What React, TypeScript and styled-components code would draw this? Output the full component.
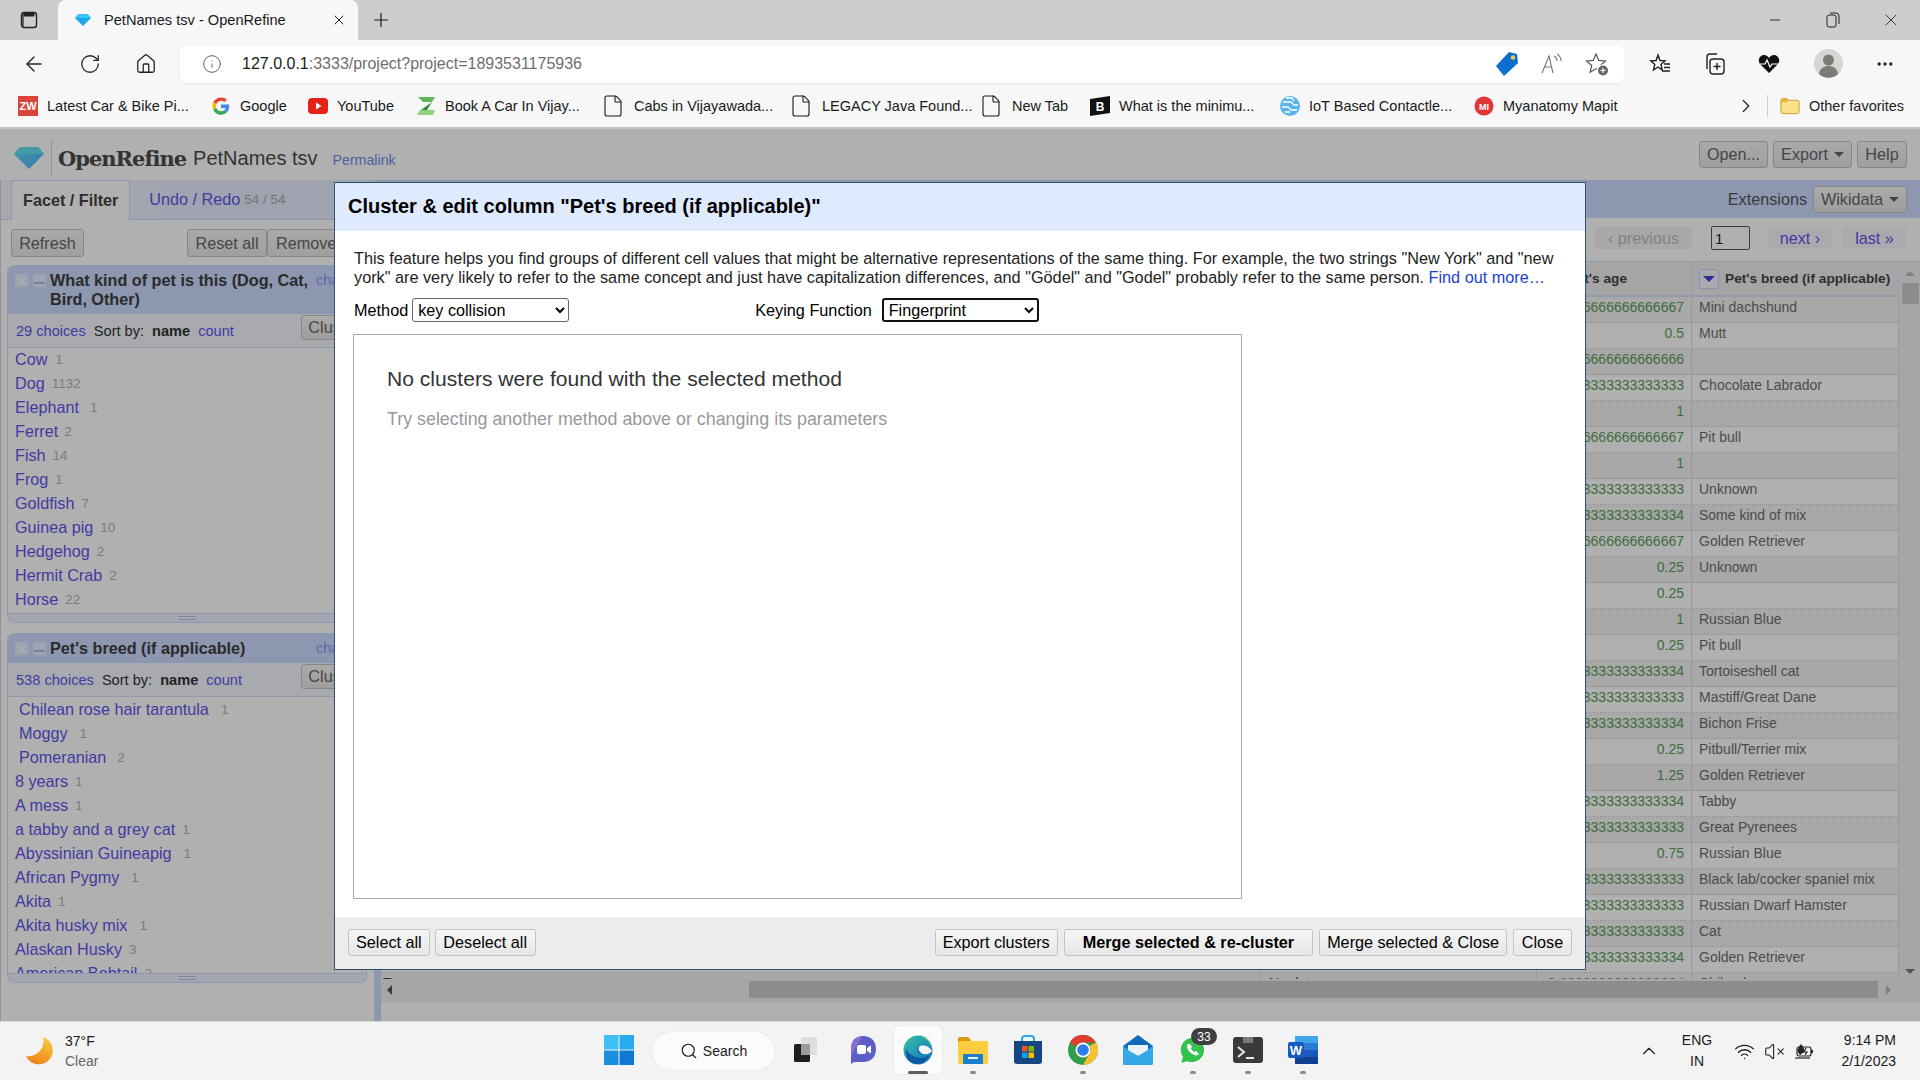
import React from 'react';
import styled, { createGlobalStyle } from 'styled-components';
import {
  ArrowLeft,
  ChevronRight,
  ChevronUp,
  Ellipsis,
  File,
  Home,
  Info,
  Minus,
  Plus,
  RotateCw,
  Search,
  VolumeX,
  Wifi,
  X,
} from 'lucide-react';

const GlobalStyle = createGlobalStyle`
  html, body {
    margin: 0;
    padding: 0;
    width: 1920px;
    height: 1080px;
    overflow: hidden;
    font-family: "Liberation Sans", Arial, sans-serif;
  }
  * { box-sizing: border-box; }
`;

const Page = styled.div`
  width: 1920px;
  height: 1080px;
  display: flex;
  flex-direction: column;
  background: #fff;
`;

/* browser chrome */
const TabStrip = styled.div`
  height: 40px;
  display: flex;
  background: #cdcdcd;
  color: #1a1a1a;
`;
const StripButton = styled.div<{ $w: number }>`
  width: ${p => p.$w}px;
  display: flex;
  align-items: center;
  justify-content: center;
  flex: none;
`;
const Tab = styled.div`
  width: 300px;
  padding: 0 11px 0 17px;
  display: flex;
  align-items: center;
  background: #f7f7f7;
  border-radius: 8px 8px 0 0;
  font-size: 14.6px;
`;
const TabTitle = styled.span`
  margin-left: 13px;
  flex: 1;
`;
const Spacer = styled.div`
  flex: 1;
`;
const Toolbar = styled.div`
  height: 47px;
  display: flex;
  align-items: center;
  padding: 0 9px 0 6px;
  background: #f7f7f7;
  color: #222;
`;
const NavButton = styled.div<{ $w?: number }>`
  width: ${p => p.$w ?? 56}px;
  display: flex;
  justify-content: center;
  flex: none;
`;
const AddressBar = styled.div`
  flex: 1;
  height: 38px;
  margin: 0 9px 0 6px;
  padding: 0 15px 0 22px;
  display: flex;
  align-items: center;
  gap: 20px;
  background: #fff;
  border-radius: 6px;
  box-shadow: 0 1px 2px rgba(0, 0, 0, 0.08);
  color: #666;
`;
const Url = styled.div`
  flex: 1;
  font-size: 16px;
  color: #6e6e6e;
`;
const UrlHost = styled.span`
  color: #1a1a1a;
`;
const AddressIcons = styled.div`
  display: flex;
  align-items: center;
  gap: 21px;
`;
const BookmarksBar = styled.div`
  height: 42px;
  padding: 0 12px 2px 18px;
  display: flex;
  align-items: center;
  background: #f7f7f7;
  border-bottom: 2px solid #c4c4c4;
  font-size: 14.5px;
  color: #1a1a1a;
`;
const Bookmark = styled.div<{ $w: number }>`
  width: ${p => p.$w}px;
  display: flex;
  align-items: center;
  gap: 9px;
  flex: none;
  white-space: nowrap;
`;
const BookmarkIcon = styled.div`
  width: 20px;
  height: 20px;
  display: flex;
  align-items: center;
  justify-content: center;
  flex: none;
`;
const FileGlyph = styled(File)`
  flex: none;
  margin-left: -5px;
`;
const ZwBadge = styled.div`
  width: 20px;
  height: 20px;
  display: flex;
  align-items: center;
  justify-content: center;
  background: #d9453a;
  color: #fff;
  font-size: 11px;
  font-weight: 700;
`;
const BookmarksEnd = styled.div`
  display: flex;
  align-items: center;
  color: #222;
`;
const BarDivider = styled.div`
  width: 1px;
  height: 22px;
  margin: 0 12px 0 10px;
  background: #cfcfcf;
`;

/* OpenRefine page, drawn undimmed and covered by the modal backdrop */
const AppArea = styled.div`
  position: relative;
  flex: 1;
  min-height: 0;
  display: flex;
  flex-direction: column;
  overflow: hidden;
  background: #fff;
  font-size: 16.2px;
  color: #333;
`;
const AppHeader = styled.div`
  height: 51px;
  flex: none;
  padding: 0 13px 0 14px;
  display: flex;
  align-items: center;
`;
const BrandGroup = styled.div`
  padding-top: 7px;
  display: flex;
  align-items: center;
`;
const LogoDivider = styled.div`
  width: 1px;
  height: 36px;
  margin: 0 6px 0 7px;
  background: #cfd8f0;
`;
const Brand = styled.div`
  font-family: "DejaVu Serif", "Liberation Serif", serif;
  font-weight: 700;
  font-size: 21px;
  letter-spacing: -1px;
  color: #4a4a4a;
`;
const ProjectName = styled.div`
  margin-left: 7px;
  font-size: 20px;
  color: #4a4a4a;
`;
const Permalink = styled.a`
  margin-left: 15px;
  margin-top: 3px;
  font-size: 14.2px;
  color: #6e8ee6;
`;
const HeaderActions = styled.div`
  margin-left: auto;
  display: flex;
  gap: 5px;
`;
const Btn = styled.div<{ $w?: number; $h?: number }>`
  width: ${p => (p.$w ? `${p.$w}px` : 'auto')};
  height: ${p => p.$h ?? 27}px;
  padding: 0 7px;
  display: flex;
  align-items: center;
  justify-content: center;
  gap: 6px;
  flex: none;
  background: linear-gradient(#f6f6f6, #e6e6e6);
  border: 1px solid #c4c4c4;
  border-radius: 3px;
  color: #666;
  font-size: 16.2px;
  white-space: nowrap;
`;
const Caret = styled.span`
  width: 0;
  height: 0;
  border-left: 5px solid transparent;
  border-right: 5px solid transparent;
  border-top: 5px solid #666;
`;
const Workspace = styled.div`
  flex: 1;
  min-height: 0;
  display: flex;
`;
const LeftPanel = styled.div`
  width: 374px;
  flex: none;
  display: flex;
  flex-direction: column;
  border-left: 1px solid #d6d6d6;
  overflow: hidden;
`;
const TabsBar = styled.div`
  height: 40px;
  flex: none;
  padding-left: 10px;
  display: flex;
  align-items: flex-end;
  background: linear-gradient(90deg, #f2f5ff, #e6ecff 60%);
  border-bottom: 1px solid #cedbff;
`;
const PanelTab = styled.div<{ $active?: boolean }>`
  height: ${p => (p.$active ? 40 : 39)}px;
  padding: 0 ${p => (p.$active ? 11 : 13)}px;
  display: flex;
  align-items: center;
  margin-bottom: ${p => (p.$active ? -1 : 0)}px;
  background: ${p => (p.$active ? '#fff' : 'transparent')};
  border: ${p => (p.$active ? '1px solid #cedbff' : '0')};
  border-bottom: 0;
  font-weight: ${p => (p.$active ? 700 : 400)};
  color: ${p => (p.$active ? '#444' : '#5f55ea')};
  margin-left: ${p => (p.$active ? 0 : 6)}px;
  white-space: nowrap;
`;
const UndoCount = styled.span`
  margin-left: 4px;
  font-size: 13.5px;
  color: #aaa;
`;
const FacetTools = styled.div`
  height: 45px;
  flex: none;
  padding: 9px 8px 0 10px;
  display: flex;
  align-items: flex-start;
  overflow: hidden;
`;
const FacetStack = styled.div`
  padding: 0 7px 0 6px;
  display: flex;
  flex-direction: column;
  gap: 10px;
`;
const Facet = styled.div`
  width: 360px;
  display: flex;
  flex-direction: column;
  border: 1px solid #ccd9ff;
  border-top: 0;
  border-radius: 8px;
  overflow: hidden;
`;
const FacetHead = styled.div`
  padding: 6px 8px 5px 7px;
  display: flex;
  align-items: flex-start;
  background: #cedbff;
  line-height: 19px;
`;
const FacetIconBox = styled.div<{ $gap?: number }>`
  width: 13px;
  height: 13px;
  margin: 3px ${p => p.$gap ?? 0}px 0 0;
  display: flex;
  align-items: center;
  justify-content: center;
  background: #e4ecff;
  flex: none;
  color: #fff;
`;
const MinusBar = styled.span`
  width: 11px;
  height: 2px;
  margin-top: 5px;
  background: #aab9e8;
`;
const FacetTitle = styled.div`
  width: 266px;
  flex: none;
  font-weight: 700;
  color: #3e3e3e;
`;
const ChangeLink = styled.a`
  font-size: 14.3px;
  color: #7f9bef;
  white-space: nowrap;
`;
const FacetControls = styled.div`
  height: 34px;
  padding-left: 8px;
  display: flex;
  align-items: center;
  background: #f3f7ff;
  border-bottom: 1px solid #d4ddf7;
  font-size: 14.6px;
  white-space: nowrap;
`;
const ControlLink = styled.a<{ $gap?: number }>`
  margin-left: ${p => p.$gap ?? 0}px;
  color: #5f55ea;
`;
const SortLabel = styled.span`
  margin-left: 8px;
`;
const SortActive = styled.b`
  margin-left: 8px;
`;
const ClusterBtn = styled(Btn)`
  position: relative;
  top: -3px;
  margin-left: auto;
  margin-right: -1px;
  width: 66px;
  height: 25px;
`;
const FacetList = styled.div<{ $h: number; $lift?: boolean }>`
  height: ${p => p.$h}px;
  padding-bottom: ${p => (p.$lift ? 1 : 0)}px;
  overflow: hidden;
  & > :first-child {
    margin-top: ${p => (p.$lift ? -1 : 0)}px;
  }
`;
const FacetItem = styled.div<{ $indent?: boolean }>`
  height: 24px;
  padding-left: ${p => (p.$indent ? 11 : 7)}px;
  display: flex;
  align-items: center;
  white-space: nowrap;
  color: #5f55ea;
`;
const FacetCount = styled.span<{ $gap: number }>`
  margin-left: ${p => p.$gap}px;
  font-size: 13.5px;
  color: #b4b4b4;
`;
const FacetFoot = styled.div`
  height: 9px;
  flex: none;
  display: flex;
  align-items: center;
  justify-content: center;
  background: #eef2ff;
  border-top: 1px solid #ccd9ff;
`;
const GripLines = styled.span`
  width: 18px;
  height: 4px;
  border-top: 1px solid #b4c3ee;
  border-bottom: 1px solid #b4c3ee;
`;
const RightPanel = styled.div`
  flex: 1;
  min-width: 0;
  display: flex;
  flex-direction: column;
  border-left: 7px solid #cedbff;
`;
const ExtensionBar = styled.div`
  height: 38px;
  flex: none;
  padding: 0 13px 0 0;
  margin-left: -7px;
  display: flex;
  align-items: center;
  justify-content: flex-end;
  gap: 6px;
  background: #cedbff;
  color: #555;
`;
const Pager = styled.div`
  height: 44px;
  flex: none;
  padding: 0 14px 3px 0;
  display: flex;
  align-items: center;
  justify-content: flex-end;
  border-bottom: 1px solid #d9e2fb;
  white-space: nowrap;
`;
const PagerLink = styled.a<{ $w: number; $off?: boolean; $gap: number }>`
  width: ${p => p.$w}px;
  height: 22px;
  margin-left: ${p => p.$gap}px;
  display: flex;
  align-items: center;
  justify-content: center;
  background: ${p => (p.$off ? '#f4f4f8' : '#f6f7fd')};
  color: ${p => (p.$off ? '#bcbcbc' : '#5f55ea')};
`;
const PageBox = styled.div`
  width: 39px;
  height: 24px;
  margin-left: 19px;
  padding: 0 3px;
  display: flex;
  align-items: center;
  border: 1px solid #555;
  border-radius: 2px;
  font-size: 15px;
  color: #222;
`;
const GridWrap = styled.div`
  flex: 1;
  min-height: 0;
  display: flex;
`;
const GridBody = styled.div`
  flex: 1;
  min-width: 0;
  display: flex;
  flex-direction: column;
  overflow: hidden;
`;
const HeadRow = styled.div`
  height: 35px;
  flex: none;
  display: flex;
  align-items: center;
  background: #f0f0f0;
  border-bottom: 2px solid #d6e0fb;
  font-size: 13.7px;
  font-weight: 700;
  color: #444;
`;
const HeadFill = styled.div`
  flex: 1;
  height: 100%;
  padding-right: 64px;
  display: flex;
  align-items: center;
  justify-content: flex-end;
  border-right: 1px solid #dde5fb;
`;
const HeadBreed = styled.div`
  width: 207px;
  height: 100%;
  padding-left: 7px;
  display: flex;
  align-items: center;
  gap: 6px;
  border-right: 1px solid #dde5fb;
  white-space: nowrap;
`;
const MenuButton = styled.div`
  width: 20px;
  height: 20px;
  display: flex;
  align-items: center;
  justify-content: center;
  flex: none;
  background: #f4f6ff;
  border: 1px solid #c8d4f8;
  border-radius: 3px;
`;
const BlueCaret = styled.span`
  width: 0;
  height: 0;
  border-left: 6px solid transparent;
  border-right: 6px solid transparent;
  border-top: 6px solid #4a3fd0;
`;
const Row = styled.div<{ $odd: boolean }>`
  height: 26px;
  flex: none;
  display: flex;
  background: ${p => (p.$odd ? '#fff' : '#f3f3f3')};
  border-bottom: 1px dotted #d0d0d0;
  font-size: 14px;
  line-height: 20px;
`;
const OtherCell = styled.div<{ $w: number; $pad: number }>`
  width: ${p => p.$w}px;
  padding-left: ${p => p.$pad}px;
  flex: none;
  color: #444;
  border-right: 1px solid #ddd;
`;
const NumberCell = styled.div`
  flex: 1;
  min-width: 0;
  padding-right: 7px;
  text-align: right;
  white-space: nowrap;
  color: #5a9e5a;
  border-right: 1px solid #ddd;
`;
const BreedCell = styled.div`
  width: 207px;
  padding-left: 7px;
  flex: none;
  white-space: nowrap;
  color: #6e6e6e;
  border-right: 1px solid #ddd;
`;
const VScroll = styled.div`
  width: 21px;
  flex: none;
  padding: 9px 1px 5px 2px;
  display: flex;
  flex-direction: column;
  align-items: center;
  background: #f1f1f1;
`;
const Thumb = styled.div`
  width: 17px;
  height: 21px;
  margin-top: 7px;
  background: #cdcdcd;
`;
const ArrowUp = styled.span`
  width: 0;
  height: 0;
  border-left: 5px solid transparent;
  border-right: 5px solid transparent;
  border-bottom: 5px solid #bbb;
`;
const ArrowDown = styled.span`
  width: 0;
  height: 0;
  margin-top: auto;
  border-left: 5px solid transparent;
  border-right: 5px solid transparent;
  border-top: 5px solid #777;
`;
const HScroll = styled.div`
  height: 23px;
  flex: none;
  padding: 2px 0 4px 0;
  display: flex;
  align-items: center;
  background: #f1f1f1;
`;
const HLeft = styled.span`
  margin: 0 357px 0 6px;
  width: 0;
  height: 0;
  border-top: 5px solid transparent;
  border-bottom: 5px solid transparent;
  border-right: 5px solid #555;
`;
const HThumb = styled.div`
  flex: 1;
  height: 17px;
  background: #cbcbcb;
`;
const HRight = styled.span`
  margin: 0 29px 0 8px;
  width: 0;
  height: 0;
  border-top: 5px solid transparent;
  border-bottom: 5px solid transparent;
  border-left: 5px solid #bbb;
`;
const BottomGap = styled.div`
  height: 19px;
  flex: none;
`;
const Backdrop = styled.div`
  position: absolute;
  inset: 0;
  background: rgba(0, 0, 0, 0.31);
`;

/* cluster dialog */
const Modal = styled.div`
  position: absolute;
  left: 334px;
  top: 53px;
  width: 1252px;
  height: 788px;
  display: flex;
  flex-direction: column;
  background: #fff;
  border: 1px solid #2f4f6f;
  color: #000;
  font-size: 16.25px;
`;
const ModalHead = styled.div`
  height: 48px;
  flex: none;
  padding: 0 0 2px 13px;
  display: flex;
  align-items: center;
  background: #deebff;
  font-size: 20px;
  font-weight: 700;
`;
const ModalBody = styled.div`
  flex: 1;
  min-height: 0;
  padding: 18px 18px 0;
`;
const Intro = styled.div`
  padding-left: 1px;
  line-height: 19px;
  color: #222;
`;
const IntroLink = styled.a`
  color: #1a3fd0;
`;
const MethodRow = styled.div`
  margin-top: 11px;
  padding-left: 1px;
  display: flex;
  align-items: center;
  gap: 4px;
`;
const Picker = styled.select<{ $focus?: boolean; $before?: number; $after?: number }>`
  width: 157px;
  height: 24px;
  margin: 0 ${p => p.$after ?? 0}px 0 ${p => p.$before ?? 0}px;
  padding: 0 1px;
  background: #fff;
  border: ${p => (p.$focus ? '2px solid #111' : '1px solid #666')};
  border-radius: 3px;
  font-family: inherit;
  font-size: 16.2px;
  color: #000;
`;
const ResultBox = styled.div`
  width: 889px;
  height: 565px;
  margin-top: 12px;
  padding: 32px 33px;
  border: 1px solid #aaa;
`;
const EmptyTitle = styled.div`
  font-size: 21.1px;
  line-height: 24px;
  color: #333;
`;
const EmptyHint = styled.div`
  margin-top: 16px;
  font-size: 17.85px;
  line-height: 24px;
  color: #999;
`;
const ModalFoot = styled.div`
  height: 52px;
  flex: none;
  padding: 0 13px 1px 13px;
  display: flex;
  align-items: center;
  justify-content: space-between;
  background: #ececec;
`;
const FootGroup = styled.div<{ $gap: number }>`
  display: flex;
  gap: ${p => p.$gap}px;
`;
const FootBtn = styled(Btn)<{ $strong?: boolean }>`
  height: 27px;
  color: #000;
  font-weight: ${p => (p.$strong ? 700 : 400)};
  padding: 0 ${p => (p.$strong ? 18 : 7)}px;
`;

/* taskbar */
const Taskbar = styled.div`
  height: 59px;
  flex: none;
  display: flex;
  align-items: flex-start;
  background: #f3f3f3;
  border-top: 1px solid #dadada;
  color: #1a1a1a;
  font-size: 14px;
`;
const Weather = styled.div`
  width: 591px;
  height: 58px;
  padding-left: 26px;
  display: flex;
  align-items: center;
  gap: 11px;
  flex: none;
`;
const WeatherText = styled.div`
  line-height: 20px;
`;
const Muted = styled.div`
  color: #666;
`;
const Slot = styled.div<{ $active?: boolean; $gap?: number }>`
  position: relative;
  width: 48px;
  height: 48px;
  margin: 4px ${p => 3.5 + (p.$gap ?? 0)}px 0 3.5px;
  padding-top: 9px;
  display: flex;
  flex-direction: column;
  align-items: center;
  flex: none;
  background: ${p => (p.$active ? '#fbfbfb' : 'transparent')};
  border-radius: 4px;
  box-shadow: ${p => (p.$active ? '0 0 1px rgba(0,0,0,0.25)' : 'none')};
`;
const SlotIcon = styled.div`
  width: 30px;
  height: 30px;
  flex: none;
`;
const RunDot = styled.span<{ $active?: boolean }>`
  width: ${p => (p.$active ? 20 : 6)}px;
  height: 3px;
  margin-top: 6px;
  border-radius: 2px;
  background: ${p => (p.$active ? '#5c5c5c' : '#8a8a8a')};
`;
const SearchPill = styled.div`
  width: 123px;
  height: 38px;
  margin: 10px 4px 0 6px;
  display: flex;
  align-items: center;
  justify-content: center;
  gap: 5px;
  flex: none;
  background: #fbfbfb;
  border-radius: 19px;
  box-shadow: 0 0 1px rgba(0, 0, 0, 0.2);
`;
const CountBadge = styled.div`
  position: absolute;
  left: 22px;
  top: 2px;
  width: 26px;
  height: 17px;
  display: flex;
  align-items: center;
  justify-content: center;
  background: #3f3f3f;
  border-radius: 9px;
  color: #fff;
  font-size: 12px;
`;
const Tray = styled.div`
  margin-left: auto;
  height: 58px;
  padding-right: 24px;
  display: flex;
  align-items: center;
`;
const TrayLang = styled.div`
  width: 40px;
  margin: 0 17px 0 17px;
  text-align: center;
  line-height: 21px;
`;
const TrayIcons = styled.div`
  display: flex;
  align-items: center;
  gap: 9px;
`;
const Clock = styled.div`
  width: 80px;
  margin-left: 1px;
  text-align: right;
  line-height: 21px;
`;

/* drawn icons */
const Gem = ({ size = 16 }: { size?: number }) => (
  <svg width={size} height={size * 0.75} viewBox="0 0 32 24">
    <polygon points="7,0 25,0 32,8 16,24 0,8" fill="#1ea7e8" />
    <polygon points="0,8 32,8 25,0 7,0" fill="#37c5f2" />
  </svg>
);

const LogoGem = () => (
  <svg width={30} height={22} viewBox="0 0 30 22">
    <defs>
      <linearGradient id="gemFill" x1="0" y1="0" x2="1" y2="1">
        <stop offset="0" stopColor="#58e8f4" />
        <stop offset="1" stopColor="#55a8ff" />
      </linearGradient>
    </defs>
    <polygon points="6,0 24,0 30,7 15,22 0,7" fill="url(#gemFill)" />
    <polygon points="6,0 24,0 30,7 0,7" fill="#62e2ee" />
  </svg>
);

const SidebarIcon = () => (
  <svg width={18} height={18} viewBox="0 0 18 18" fill="none" stroke="#222">
    <rect x="1.5" y="1.5" width="15" height="15" rx="2.5" strokeWidth="1.4" />
    <path d="M4 2h10v3H4z" fill="#222" />
    <path d="M3 2v14" strokeWidth="1.2" />
  </svg>
);

const RestoreIcon = () => (
  <svg width={14} height={16} viewBox="0 0 14 16" fill="none" stroke="#222" strokeWidth="1">
    <rect x="1" y="3" width="9" height="12" rx="2" />
    <path d="M4 1h6a3 3 0 0 1 3 3v8" />
  </svg>
);

const PriceTag = () => (
  <svg width={24} height={26} viewBox="0 0 24 26">
    <path d="M14 1 22 3 23 12 9 25 1 15z" fill="#0b6fd0" />
    <circle cx="18" cy="6.5" r="2.2" fill="#f6c945" />
  </svg>
);

const ReadAloud = () => (
  <svg width={24} height={24} viewBox="0 0 24 24" fill="none" stroke="#777" strokeWidth="1.1">
    <path d="M2 21 9 4l4 17M4.5 15h7" />
    <path d="M14 4c2 1 3 3 3 5M17 2c2.500 1.500 4 4 4 7" />
  </svg>
);

const StarAdd = () => (
  <svg width={24} height={24} viewBox="0 0 24 24" fill="none" stroke="#555" strokeWidth="1.2">
    <path d="M11 2l2.700 6.400 6.800.6-5.200 4.500 1.600 6.700-5.900-3.600-5.900 3.600 1.600-6.700L1.500 9l6.800-.6z" />
    <circle cx="18" cy="18.500" r="6.200" fill="#fff" stroke="none" />
    <circle cx="18" cy="18.500" r="5" fill="#666" stroke="none" />
    <path d="M18 16v5M15.500 18.500h5" stroke="#fff" />
  </svg>
);

const Favorites = () => (
  <svg width={22} height={22} viewBox="0 0 22 22" fill="none" stroke="#222" strokeWidth="1.4">
    <path d="M9 2l2 5.500 5 .4-4 3.600 1.200 5.500L9 14l-4.500 3 1.300-5.600-4-3.500 5.300-.4z" />
    <path d="M15 11h6M15 14.500h6M13 18h8" />
  </svg>
);

const Collections = () => (
  <svg width={22} height={24} viewBox="0 0 22 24" fill="none" stroke="#222" strokeWidth="1.4">
    <rect x="7" y="7" width="14" height="15" rx="3" />
    <path d="M14 11v7M10.500 14.500h7" />
    <path d="M4 17V5a3 3 0 0 1 3-3h7" />
  </svg>
);

const HeartPulse = () => (
  <svg width={22} height={20} viewBox="0 0 22 20">
    <path d="M11 19 2 10C-1 6 2 1 6 1c2 0 4 1 5 3 1-2 3-3 5-3 4 0 7 5 4 9z" fill="#111" />
    <path d="M2 10h5l2-4 3 7 2-3h6" fill="none" stroke="#fff" strokeWidth="1.2" />
  </svg>
);

const Avatar = () => (
  <svg width={29} height={29} viewBox="0 0 29 29">
    <circle cx="14.500" cy="14.500" r="14.500" fill="#d8d6d2" />
    <circle cx="14.500" cy="11" r="5.500" fill="#7d7b78" />
    <path d="M5 25c1-6 5-8 9.500-8s8.500 2 9.500 8a14 14 0 0 1-19 0z" fill="#7d7b78" />
  </svg>
);

const GoogleG = () => (
  <svg width={18} height={18} viewBox="0 0 48 48">
    <path fill="#ea4335" d="M24 10c3.500 0 6.500 1.200 9 3.400l6.500-6.500C35.500 3.200 30.200 1 24 1 15 1 7.300 6.200 3.500 13.600l7.700 6C13 14 18 10 24 10z" />
    <path fill="#4285f4" d="M46 24.500c0-1.600-.1-3.100-.4-4.500H24v9h12.400c-.5 2.900-2.200 5.400-4.600 7l7.100 5.500C43.100 37.700 46 31.700 46 24.500z" />
    <path fill="#fbbc05" d="M11.200 28.400c-.5-1.400-.7-2.900-.7-4.400s.3-3 .7-4.400l-7.700-6C2 16.800 1 20.300 1 24s.9 7.200 2.500 10.400z" />
    <path fill="#34a853" d="M24 47c6.200 0 11.400-2 15.100-5.500L32 36c-2 1.300-4.600 2.100-8 2.100-6 0-11-4-12.800-9.700l-7.700 6C7.300 41.800 15 47 24 47z" />
  </svg>
);

const YouTubeIcon = () => (
  <svg width={20} height={16} viewBox="0 0 20 16">
    <rect width="20" height="16" rx="4" fill="#e62117" />
    <path d="M8 4.500 13.500 8 8 11.500z" fill="#fff" />
  </svg>
);

const ZigIcon = () => (
  <svg width={19} height={20} viewBox="0 0 19 20">
    <path d="M1 1h17l-3 5H6z" fill="#5db85c" />
    <path d="M15 6 4 14h6z" fill="#2e8b3d" />
    <path d="M3 14h15l-2 5H0z" fill="#8fd07e" />
  </svg>
);

const BlackB = () => (
  <svg width={20} height={20} viewBox="0 0 20 20">
    <path d="M0 3 20 0v17L0 20z" fill="#111" />
    <text x="10" y="15" textAnchor="middle" fontSize="12" fontWeight="700" fill="#fff" fontFamily="Liberation Sans">B</text>
  </svg>
);

const IotIcon = () => (
  <svg width={20} height={22} viewBox="0 0 20 22" fill="none">
    <circle cx="10" cy="11" r="10" fill="#58b3ea" />
    <path d="M3 7h8l3 3h4M2 12h6l3 3h6M5 17h5M6 3h6l2 3" stroke="#fff" strokeWidth="1.300" />
  </svg>
);

const MapitIcon = () => (
  <svg width={20} height={20} viewBox="0 0 20 20">
    <circle cx="10" cy="10" r="9.500" fill="#e03535" />
    <text x="10" y="13.500" textAnchor="middle" fontSize="9" fontWeight="700" fill="#fff" fontFamily="Liberation Sans">MI</text>
  </svg>
);

const FolderIcon = () => (
  <svg width={21} height={20} viewBox="0 0 21 20">
    <path d="M1 4a2 2 0 0 1 2-2h4l2 2h9a2 2 0 0 1 2 2v10a2 2 0 0 1-2 2H3a2 2 0 0 1-2-2z" fill="#fbe28a" stroke="#c79a2a" />
    <path d="M1 4a2 2 0 0 1 2-2h4l2 2-2 2H1z" fill="#e8b83c" />
  </svg>
);

const Moon = () => (
  <svg width={28} height={28} viewBox="0 0 28 28">
    <defs>
      <linearGradient id="moonFill" x1="0.7" y1="0" x2="0.3" y2="1">
        <stop offset="0" stopColor="#f6cb3d" />
        <stop offset="1" stopColor="#f0801a" />
      </linearGradient>
    </defs>
    <path d="M17 0a14 14 0 1 1-17 19c9 2 20-7 17-19z" fill="url(#moonFill)" />
  </svg>
);

const WinLogo = () => (
  <svg width={30} height={30} viewBox="0 0 30 30">
    <rect width="14.500" height="14.500" fill="#3fc0f5" />
    <rect x="15.500" width="14.500" height="14.500" fill="#27aaf0" />
    <rect y="15.500" width="14.500" height="14.500" fill="#1a8fe0" />
    <rect x="15.500" y="15.500" width="14.500" height="14.500" fill="#0f78d4" />
  </svg>
);

const TaskView = () => (
  <svg width={30} height={30} viewBox="0 0 30 30">
    <rect x="2" y="9" width="16" height="18" rx="1.500" fill="#1d1d1d" />
    <rect x="9" y="2" width="16" height="18" rx="1.500" fill="#dcdcdc" opacity="0.9" />
    <rect x="9" y="9" width="9" height="11" fill="#9a9a9a" />
  </svg>
);

const MeetIcon = () => (
  <svg width={30} height={30} viewBox="0 0 30 30">
    <path d="M15 1c8 0 13 5 13 13s-5 13-13 13H6l-3 2V14C3 6 7 1 15 1z" fill="#5b5fc7" />
    <path d="M15 1C9 1 3 6 3 14v8c3-6 6-15 12-21z" fill="#8a6fd1" />
    <rect x="9" y="10" width="9" height="9" rx="2" fill="#fff" />
    <path d="M19 13l4-2.500v8L19 16z" fill="#fff" />
  </svg>
);

const EdgeIcon = () => (
  <svg width={30} height={30} viewBox="0 0 30 30">
    <defs>
      <linearGradient id="edgeFill" x1="0" y1="0" x2="1" y2="1">
        <stop offset="0" stopColor="#35c1a0" />
        <stop offset="1" stopColor="#0f6fc6" />
      </linearGradient>
    </defs>
    <circle cx="15" cy="15" r="14.500" fill="url(#edgeFill)" />
    <path d="M29 17c-2-6-8-8-12-6-4 2-3 7 1 8 3 1 7 0 9-1-2 7-8 11-12 11C6 29 2 22 3 14 6 20 13 23 18 23c4 0 8-2 11-6z" fill="#0c59a4" />
    <path d="M17 11c4-2 9 0 12 5-1 2-5 4-9 3-4-1-6-6-3-8z" fill="#f3f3f3" />
    <path d="M29 14c0-8-6-14-14-14 6 1 12 6 14 14z" fill="#7fe08a" />
  </svg>
);

const ExplorerIcon = () => (
  <svg width={30} height={30} viewBox="0 0 30 30">
    <path d="M0 4a2 2 0 0 1 2-2h8l3 3v4H0z" fill="#d99b0e" />
    <rect y="6" width="30" height="23" rx="2" fill="#fbcd3f" />
    <path d="M6 19h18a1 1 0 0 1 1 1v9H5v-9a1 1 0 0 1 1-1z" fill="#1b7fd0" />
    <rect x="10" y="22" width="10" height="2" fill="#e9f4ff" />
  </svg>
);

const StoreIcon = () => (
  <svg width={30} height={30} viewBox="0 0 30 30">
    <path d="M9 7V4a3 3 0 0 1 3-3h6a3 3 0 0 1 3 3v3" fill="none" stroke="#29a8e8" strokeWidth="2" />
    <path d="M1 6h28v20a3 3 0 0 1-3 3H4a3 3 0 0 1-3-3z" fill="#14467f" />
    <rect x="9" y="11" width="5.500" height="5.500" fill="#f25022" />
    <rect x="15.500" y="11" width="5.500" height="5.500" fill="#7fba00" />
    <rect x="9" y="17.500" width="5.500" height="5.500" fill="#00a4ef" />
    <rect x="15.500" y="17.500" width="5.500" height="5.500" fill="#ffb900" />
  </svg>
);

const ChromeIcon = () => (
  <svg width={30} height={30} viewBox="0 0 30 30">
    <circle cx="15" cy="15" r="15" fill="#2f9e48" />
    <path d="M15 0a15 15 0 0 1 13 7.500H15a7.500 7.500 0 0 0-7 4.500L2 7A15 15 0 0 1 15 0z" fill="#e33b2e" />
    <path d="M28 7.500A15 15 0 0 1 15 30l6.500-11.500A7.500 7.500 0 0 0 21.500 11z" fill="#fbc02d" />
    <circle cx="15" cy="15" r="7.500" fill="#fff" />
    <circle cx="15" cy="15" r="5.800" fill="#2b7de9" />
  </svg>
);

const MailIcon = () => (
  <svg width={30} height={30} viewBox="0 0 30 30">
    <path d="M15 0 30 11v17a2 2 0 0 1-2 2H2a2 2 0 0 1-2-2V11z" fill="#0f6cbd" />
    <path d="M0 11l15 10 15-10v17a2 2 0 0 1-2 2H2a2 2 0 0 1-2-2z" fill="#35a8e8" />
    <path d="M5 10h20v5l-10 6-10-6z" fill="#e8f3fb" />
  </svg>
);

const WhatsAppIcon = () => (
  <svg width={30} height={30} viewBox="0 0 30 30">
    <path d="M15 2a13 13 0 0 0-11 20L2 29l7-2A13 13 0 1 0 15 2z" fill="#37c24f" stroke="#fff" strokeWidth="1.500" />
    <path d="M10 9c-2 2-1 6 3 9s6 3 8 1l-3-3-2 1c-2-1-3-3-3-4l1-1-2-3z" fill="#fff" />
  </svg>
);

const TerminalIcon = () => (
  <svg width={30} height={30} viewBox="0 0 30 30">
    <rect y="2" width="30" height="26" rx="3" fill="#3a3a3a" />
    <rect x="10" y="2" width="10" height="6" fill="#7a7a7a" />
    <path d="M5 12l6 5-6 5" fill="none" stroke="#e8e8e8" strokeWidth="2" />
    <path d="M13 23h8" stroke="#e8e8e8" strokeWidth="2" />
  </svg>
);

const WordIcon = () => (
  <svg width={30} height={30} viewBox="0 0 30 30">
    <rect x="7" y="1" width="23" height="28" rx="2" fill="#2b7cd3" />
    <rect x="7" y="1" width="23" height="7" fill="#41a5ee" />
    <rect x="7" y="15" width="23" height="7" fill="#185abd" />
    <rect x="7" y="22" width="23" height="7" fill="#103f91" />
    <rect y="7" width="16" height="16" rx="2" fill="#185abd" />
    <text x="8" y="20" textAnchor="middle" fontSize="13" fontWeight="700" fill="#fff" fontFamily="Liberation Sans">W</text>
  </svg>
);

const BatteryIcon = () => (
  <svg width={21} height={18} viewBox="0 0 21 18" fill="none" stroke="#222" strokeWidth="1.200">
    <rect x="3" y="5" width="14" height="9" rx="2" />
    <path d="M18 8v3" strokeWidth="2" />
    <path d="M1 16h15" />
    <path d="M6 13c-3-3-3-6 1-11 2 3 4 5 3 8z" fill="#222" stroke="none" />
    <path d="M12 6l-2 4h3l-2 3" />
  </svg>
);

const pageGlyph = <FileGlyph size={24} strokeWidth={1.1} />;

const bookmarks: { label: string; w: number; icon: React.ReactNode }[] = [
  { label: 'Latest Car & Bike Pi...', w: 193, icon: <ZwBadge>ZW</ZwBadge> },
  { label: 'Google', w: 97, icon: <GoogleG /> },
  { label: 'YouTube', w: 108, icon: <YouTubeIcon /> },
  { label: 'Book A Car In Vijay...', w: 189, icon: <ZigIcon /> },
  { label: 'Cabs in Vijayawada...', w: 188, icon: pageGlyph },
  { label: 'LEGACY Java Found...', w: 190, icon: pageGlyph },
  { label: 'New Tab', w: 107, icon: pageGlyph },
  { label: 'What is the minimu...', w: 190, icon: <BlackB /> },
  { label: 'IoT Based Contactle...', w: 194, icon: <IotIcon /> },
  { label: 'Myanatomy Mapit', w: 200, icon: <MapitIcon /> },
];

const petKinds = [
  { name: 'Cow', count: 1, gap: 8 },
  { name: 'Dog', count: 1132, gap: 7 },
  { name: 'Elephant', count: 1, gap: 11 },
  { name: 'Ferret', count: 2, gap: 6 },
  { name: 'Fish', count: 14, gap: 7 },
  { name: 'Frog', count: 1, gap: 7 },
  { name: 'Goldfish', count: 7, gap: 7 },
  { name: 'Guinea pig', count: 10, gap: 7 },
  { name: 'Hedgehog', count: 2, gap: 7 },
  { name: 'Hermit Crab', count: 2, gap: 7 },
  { name: 'Horse', count: 22, gap: 7 },
];

const breeds = [
  { name: 'Chilean rose hair tarantula', count: 1, gap: 12, indent: true },
  { name: 'Moggy', count: 1, gap: 12, indent: true },
  { name: 'Pomeranian', count: 2, gap: 11, indent: true },
  { name: '8 years', count: 1, gap: 7 },
  { name: 'A mess', count: 1, gap: 7 },
  { name: 'a tabby and a grey cat', count: 1, gap: 7 },
  { name: 'Abyssinian Guineapig', count: 1, gap: 12 },
  { name: 'African Pygmy', count: 1, gap: 12 },
  { name: 'Akita', count: 1, gap: 7 },
  { name: 'Akita husky mix', count: 1, gap: 12 },
  { name: 'Alaskan Husky', count: 3, gap: 7 },
  { name: 'American Bobtail', count: 2, gap: 7 },
];

const rows = [
  ['0.16666666666666667', 'Mini dachshund'],
  ['0.5', 'Mutt'],
  ['0.16666666666666666', ''],
  ['0.3333333333333333', 'Chocolate Labrador'],
  ['1', ''],
  ['0.16666666666666667', 'Pit bull'],
  ['1', ''],
  ['0.3333333333333333', 'Unknown'],
  ['0.3333333333333334', 'Some kind of mix'],
  ['0.16666666666666667', 'Golden Retriever'],
  ['0.25', 'Unknown'],
  ['0.25', ''],
  ['1', 'Russian Blue'],
  ['0.25', 'Pit bull'],
  ['0.3333333333333334', 'Tortoiseshell cat'],
  ['0.3333333333333333', 'Mastiff/Great Dane'],
  ['0.3333333333333334', 'Bichon Frise'],
  ['0.25', 'Pitbull/Terrier mix'],
  ['1.25', 'Golden Retriever'],
  ['0.3333333333333334', 'Tabby'],
  ['0.3333333333333333', 'Great Pyrenees'],
  ['0.75', 'Russian Blue'],
  ['0.3333333333333333', 'Black lab/cocker spaniel mix'],
  ['0.3333333333333333', 'Russian Dwarf Hamster'],
  ['0.3333333333333333', 'Cat'],
  ['0.3333333333333334', 'Golden Retriever'],
  ['0.3333333333333334', 'Chihuahua'],
];

const taskIcons = [
  { icon: <TaskView />, gap: 1.5 },
  { icon: <MeetIcon /> },
  { icon: <EdgeIcon />, dot: true, active: true },
  { icon: <ExplorerIcon />, dot: true },
  { icon: <StoreIcon /> },
  { icon: <ChromeIcon />, dot: true },
  { icon: <MailIcon /> },
  { icon: <WhatsAppIcon />, dot: true, badge: '33' },
  { icon: <TerminalIcon />, dot: true },
  { icon: <WordIcon />, dot: true },
];

const FacetHeader = ({ title }: { title: string }) => (
  <FacetHead>
    <FacetIconBox $gap={5}>
      <X size={12} strokeWidth={3} />
    </FacetIconBox>
    <FacetIconBox $gap={4}>
      <MinusBar />
    </FacetIconBox>
    <FacetTitle>{title}</FacetTitle>
    <ChangeLink>change</ChangeLink>
  </FacetHead>
);

const FacetBar = ({ choices }: { choices: string }) => (
  <FacetControls>
    <ControlLink>{choices}</ControlLink>
    <SortLabel>Sort by:</SortLabel>
    <SortActive>name</SortActive>
    <ControlLink $gap={8}>count</ControlLink>
    <ClusterBtn>Cluster</ClusterBtn>
  </FacetControls>
);

export default function App() {
  return (
    <Page>
      <GlobalStyle />
      <TabStrip>
        <StripButton $w={58}>
          <SidebarIcon />
        </StripButton>
        <Tab>
          <Gem />
          <TabTitle>PetNames tsv - OpenRefine</TabTitle>
          <X size={16} strokeWidth={1.5} />
        </Tab>
        <StripButton $w={46}>
          <Plus size={22} strokeWidth={1.3} />
        </StripButton>
        <Spacer />
        <StripButton $w={58}>
          <Minus size={16} strokeWidth={1.3} />
        </StripButton>
        <StripButton $w={58}>
          <RestoreIcon />
        </StripButton>
        <StripButton $w={58}>
          <X size={20} strokeWidth={1} />
        </StripButton>
      </TabStrip>
      <Toolbar>
        <NavButton>
          <ArrowLeft size={24} strokeWidth={1.4} />
        </NavButton>
        <NavButton>
          <RotateCw size={22} strokeWidth={1.4} />
        </NavButton>
        <NavButton>
          <Home size={22} strokeWidth={1.4} />
        </NavButton>
        <AddressBar>
          <Info size={20} strokeWidth={1.2} />
          <Url>
            <UrlHost>127.0.0.1</UrlHost>:3333/project?project=1893531175936
          </Url>
          <AddressIcons>
            <PriceTag />
            <ReadAloud />
            <StarAdd />
          </AddressIcons>
        </AddressBar>
        <NavButton $w={54}>
          <Favorites />
        </NavButton>
        <NavButton $w={54}>
          <Collections />
        </NavButton>
        <NavButton $w={56}>
          <HeartPulse />
        </NavButton>
        <NavButton $w={62}>
          <Avatar />
        </NavButton>
        <NavButton $w={52}>
          <Ellipsis size={20} strokeWidth={2} />
        </NavButton>
      </Toolbar>
      <BookmarksBar>
        {bookmarks.map(b => (
          <Bookmark key={b.label} $w={b.w}>
            <BookmarkIcon>{b.icon}</BookmarkIcon>
            {b.label}
          </Bookmark>
        ))}
        <Spacer />
        <BookmarksEnd>
          <ChevronRight size={22} strokeWidth={1.3} />
          <BarDivider />
          <Bookmark $w={128}>
            <BookmarkIcon>
              <FolderIcon />
            </BookmarkIcon>
            Other favorites
          </Bookmark>
        </BookmarksEnd>
      </BookmarksBar>

      <AppArea>
        <AppHeader>
          <BrandGroup>
            <LogoGem />
            <LogoDivider />
            <Brand>OpenRefine</Brand>
            <ProjectName>PetNames tsv</ProjectName>
            <Permalink>Permalink</Permalink>
          </BrandGroup>
          <HeaderActions>
            <Btn $w={69}>Open...</Btn>
            <Btn $w={79}>
              Export
              <Caret />
            </Btn>
            <Btn $w={50}>Help</Btn>
          </HeaderActions>
        </AppHeader>
        <Workspace>
          <LeftPanel>
            <TabsBar>
              <PanelTab $active>Facet / Filter</PanelTab>
              <PanelTab>
                Undo / Redo<UndoCount>54 / 54</UndoCount>
              </PanelTab>
            </TabsBar>
            <FacetTools>
              <Btn $w={73} $h={28}>Refresh</Btn>
              <Spacer />
              <Btn $w={80} $h={28}>Reset all</Btn>
              <Btn $w={99} $h={28}>Remove all</Btn>
            </FacetTools>
            <FacetStack>
              <Facet>
                <FacetHeader title="What kind of pet is this (Dog, Cat, Bird, Other)" />
                <FacetBar choices="29 choices" />
                <FacetList $h={265} $lift>
                  {petKinds.map(k => (
                    <FacetItem key={k.name}>
                      {k.name}
                      <FacetCount $gap={k.gap}>{k.count}</FacetCount>
                    </FacetItem>
                  ))}
                </FacetList>
                <FacetFoot>
                  <GripLines />
                </FacetFoot>
              </Facet>
              <Facet>
                <FacetHeader title="Pet's breed (if applicable)" />
                <FacetBar choices="538 choices" />
                <FacetList $h={276}>
                  {breeds.map(b => (
                    <FacetItem key={b.name} $indent={b.indent}>
                      {b.name}
                      <FacetCount $gap={b.gap}>{b.count}</FacetCount>
                    </FacetItem>
                  ))}
                </FacetList>
                <FacetFoot>
                  <GripLines />
                </FacetFoot>
              </Facet>
            </FacetStack>
          </LeftPanel>
          <RightPanel>
            <ExtensionBar>
              Extensions
              <Btn $w={94}>
                Wikidata
                <Caret />
              </Btn>
            </ExtensionBar>
            <Pager>
              <PagerLink $w={97} $off $gap={0}>‹ previous</PagerLink>
              <PageBox>1</PageBox>
              <PagerLink $w={64} $gap={18}>next ›</PagerLink>
              <PagerLink $w={63} $gap={11}>last »</PagerLink>
            </Pager>
            <GridWrap>
              <GridBody>
                <HeadRow>
                  <HeadFill>Pet's age</HeadFill>
                  <HeadBreed>
                    <MenuButton>
                      <BlueCaret />
                    </MenuButton>
                    Pet's breed (if applicable)
                  </HeadBreed>
                </HeadRow>
                {rows.map(([age, breed], i) => (
                  <Row key={i} $odd={i % 2 === 1}>
                    <OtherCell $w={879} $pad={2}>{i === 26 ? 'Tr' : ''}</OtherCell>
                    <OtherCell $w={277} $pad={9}>{i === 26 ? 'No data' : ''}</OtherCell>
                    <NumberCell>{age}</NumberCell>
                    <BreedCell>{breed}</BreedCell>
                  </Row>
                ))}
              </GridBody>
              <VScroll>
                <ArrowUp />
                <Thumb />
                <ArrowDown />
              </VScroll>
            </GridWrap>
            <HScroll>
              <HLeft />
              <HThumb />
              <HRight />
            </HScroll>
            <BottomGap />
          </RightPanel>
        </Workspace>
        <Backdrop />
        <Modal>
          <ModalHead>Cluster &amp; edit column "Pet's breed (if applicable)"</ModalHead>
          <ModalBody>
            <Intro>
              This feature helps you find groups of different cell values that might be alternative representations of the same thing. For example, the two strings "New York" and "new york" are very likely to refer to the same concept and just have capitalization differences, and "Gödel" and "Godel" probably refer to the same person. <IntroLink>Find out more…</IntroLink>
            </Intro>
            <MethodRow>
              Method
              <Picker $after={182} defaultValue="key collision">
                <option>key collision</option>
                <option>nearest neighbor</option>
              </Picker>
              Keying Function
              <Picker $focus $before={6} defaultValue="Fingerprint">
                <option>Fingerprint</option>
                <option>ngram-fingerprint</option>
              </Picker>
            </MethodRow>
            <ResultBox>
              <EmptyTitle>No clusters were found with the selected method</EmptyTitle>
              <EmptyHint>Try selecting another method above or changing its parameters</EmptyHint>
            </ResultBox>
          </ModalBody>
          <ModalFoot>
            <FootGroup $gap={5}>
              <FootBtn>Select all</FootBtn>
              <FootBtn $w={101}>Deselect all</FootBtn>
            </FootGroup>
            <FootGroup $gap={6}>
              <FootBtn>Export clusters</FootBtn>
              <FootBtn $strong>Merge selected &amp; re-cluster</FootBtn>
              <FootBtn>Merge selected &amp; Close</FootBtn>
              <FootBtn $w={59}>Close</FootBtn>
            </FootGroup>
          </ModalFoot>
        </Modal>
      </AppArea>

      <Taskbar>
        <Weather>
          <Moon />
          <WeatherText>
            37°F
            <Muted>Clear</Muted>
          </WeatherText>
        </Weather>
        <Slot>
          <SlotIcon>
            <WinLogo />
          </SlotIcon>
        </Slot>
        <SearchPill>
          <Search size={18} strokeWidth={1.5} />
          Search
        </SearchPill>
        {taskIcons.map((t, i) => (
          <Slot key={i} $active={t.active} $gap={t.gap}>
            <SlotIcon>{t.icon}</SlotIcon>
            {t.dot && <RunDot $active={t.active} />}
            {t.badge && <CountBadge>{t.badge}</CountBadge>}
          </Slot>
        ))}
        <Tray>
          <ChevronUp size={22} strokeWidth={1.2} />
          <TrayLang>
            ENG
            <br />
            IN
          </TrayLang>
          <TrayIcons>
            <Wifi size={21} strokeWidth={1.5} />
            <VolumeX size={21} strokeWidth={1.2} />
            <BatteryIcon />
          </TrayIcons>
          <Clock>
            9:14 PM
            <br />
            2/1/2023
          </Clock>
        </Tray>
      </Taskbar>
    </Page>
  );
}
